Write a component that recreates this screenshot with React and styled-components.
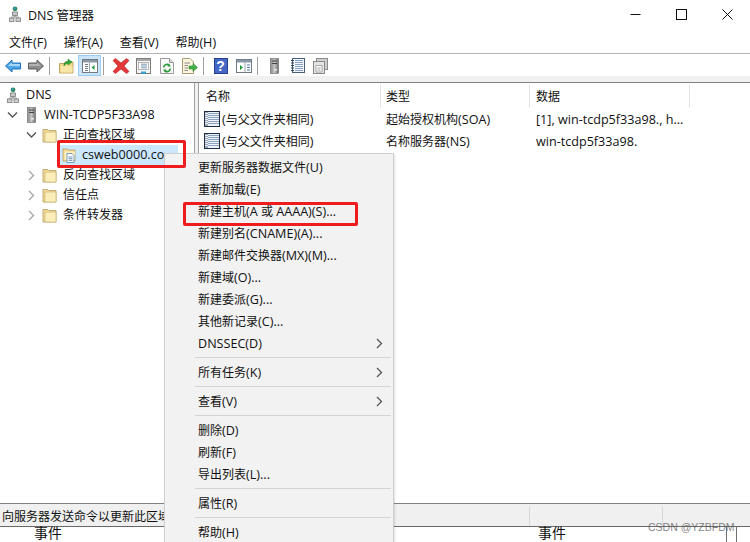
import React from 'react';
import styled, { createGlobalStyle } from 'styled-components';

const GlobalStyle = createGlobalStyle`
  html, body {
    margin: 0;
    padding: 0;
    background: #fff;
  }
  * {
    box-sizing: border-box;
  }
`;

const Window = styled.div`
  position: relative;
  width: 750px;
  height: 542px;
  overflow: hidden;
  display: flex;
  flex-direction: column;
  background: #fff;
  color: #111;
  font-family: 'Open Sans', 'Noto Sans CJK SC', sans-serif;
  font-size: 12px;
`;

// latin runs sit a bit wider than the CJK ones in the original UI font
const Latin = styled.span`
  font-size: 12.6px;
`;

const Mixed = ({ text }) =>
  text
    .split(/([\x20-\x7e]+)/)
    .filter(Boolean)
    .map((part, i) =>
      /^[\x20-\x7e]+$/.test(part) ? <Latin key={i}>{part}</Latin> : <span key={i}>{part}</span>
    );

const TitleBar = styled.div`
  height: 31px;
  flex: none;
  display: flex;
  align-items: center;
  padding: 0 0 3px 9px;
  gap: 7px;
  font-size: 12.5px;
`;

const TitleText = styled.span`
  flex: 1;
`;

const WinControls = styled.div`
  display: flex;
  align-items: center;
`;

const WinButton = styled.div`
  width: 46px;
  height: 24px;
  display: flex;
  align-items: center;
  justify-content: center;
`;

const MenuBar = styled.div`
  height: 23px;
  flex: none;
  display: flex;
  gap: 16.7px;
  align-items: center;
  padding-left: 9px;
  border-bottom: 1px solid #b4b4bc;
`;

const Toolbar = styled.div`
  height: 22px;
  flex: none;
  display: flex;
  padding: 1px 0 0 1px;
`;

const ToolButton = styled.div`
  width: 23px;
  height: 21px;
  display: flex;
  align-items: center;
  justify-content: center;
  background: ${(p) => (p.$active ? '#cce4f7' : 'transparent')};
  border: 1px solid ${(p) => (p.$active ? '#99cdf5' : 'transparent')};
`;

const ToolSep = styled.div`
  width: 8px;
  display: flex;
  padding-left: 2px;
  align-items: center;

  &::before {
    content: '';
    width: 1px;
    height: 18px;
    background: #a0a0a0;
  }
`;

const HelpButton = styled.div`
  width: 14px;
  height: 16px;
  background: #4468c4;
  border: 1px solid #26408f;
  color: #fff;
  text-align: center;
  line-height: 14px;
  font-family: 'Liberation Sans', sans-serif;
  font-weight: bold;
  font-size: 14px;
`;

const Strip = styled.div`
  height: 7px;
  flex: none;
  background: #f0f0f0;
  border-bottom: 1px solid #808080;
`;

const Panes = styled.div`
  flex: 1;
  display: flex;
  min-height: 0;
  background: #f0f0f0;
`;

const TreePane = styled.div`
  width: 195px;
  flex: none;
  background: #fff;
  padding-top: 2px;
  border-right: 1px solid #a0a0a0;
  overflow: hidden;
`;

const TreeRow = styled.div`
  height: 20px;
  display: flex;
  align-items: center;
  padding-left: ${(p) => p.$indent}px;
  white-space: nowrap;
`;

const TreeRowLabel = styled.span`
  margin-left: ${(p) => p.$gap ?? 7}px;
  line-height: 20px;
`;

const SelectedRow = styled(TreeRow)`
  background: #cce8ff;
  width: 118px;
  margin-left: 60px;
`;

const Chevron = styled.span`
  width: 12px;
  height: 12px;
  display: flex;
  align-items: center;
  justify-content: center;
  flex: none;
  margin-right: ${(p) => p.$after ?? 5}px;
`;

const ListPane = styled.div`
  flex: 1;
  margin-left: 3px;
  background: #fff;
  border-left: 1px solid #a0a0a0;
  display: flex;
  flex-direction: column;
  min-width: 0;
`;

const ListHeader = styled.div`
  height: 25px;
  flex: none;
  display: flex;
  padding-top: 1px;
`;

const HeaderCell = styled.div`
  width: ${(p) => p.$w}px;
  flex: none;
  padding-left: ${(p) => p.$pad}px;
  line-height: 25px;
  height: 24px;
  border-right: 1px solid #e5e5e5;
`;

const ListRow = styled.div`
  height: 22px;
  display: flex;
  align-items: center;
  white-space: nowrap;
`;

const NameCell = styled.div`
  width: 182px;
  flex: none;
  display: flex;
  align-items: center;
  gap: 2px;
  padding-left: 5px;
`;

const TextCell = styled.div`
  width: ${(p) => p.$w}px;
  flex: none;
  padding-left: 5px;
`;

const StatusBar = styled.div`
  height: 24px;
  flex: none;
  display: flex;
  background: #f0f0f0;
  border-top: 1px solid #808080;
  border-bottom: 1px solid #696969;
  padding-top: 2px;
`;

const StatusCell = styled.div`
  width: ${(p) => p.$w}px;
  flex: none;
  height: 20px;
  line-height: 21px;
  padding-left: 2px;
  white-space: nowrap;
  overflow: hidden;
  border-right: 1px solid #d8d8d8;
`;

const EventsRow = styled.div`
  height: 15px;
  flex: none;
  display: flex;
  line-height: 11px;
`;

const EventCell = styled.div`
  width: ${(p) => p.$w}px;
  flex: none;
  padding-left: ${(p) => p.$pad}px;
  font-size: 14px;
`;

const ContextMenu = styled.div`
  position: absolute;
  left: 164px;
  top: 153px;
  width: 230px;
  height: 400px;
  background: #f2f2f2;
  border: 1px solid #cfcfcf;
  padding: 2px 0 0 2px;
  box-shadow: 1px 1px 2px rgba(0, 0, 0, 0.12);
`;

const MenuItem = styled.div`
  height: 22px;
  display: flex;
  align-items: center;
  justify-content: space-between;
  padding-left: 31px;
  padding-right: 10px;
  white-space: nowrap;
`;

const MenuSep = styled.div`
  height: 1px;
  margin: 3px 2px 3px 28px;
  background: #d4d4d4;
`;

const RedBox = styled.div`
  position: absolute;
  left: ${(p) => p.$x}px;
  top: ${(p) => p.$y}px;
  width: ${(p) => p.$w}px;
  height: ${(p) => p.$h}px;
  border: 3px solid #ee1c1c;
  border-radius: 2px;
`;

const Watermark = styled.div`
  position: absolute;
  left: 648px;
  top: 521px;
  font-family: 'Liberation Sans', sans-serif;
  font-size: 10.5px;
  color: rgba(90, 90, 90, 0.75);
  white-space: nowrap;
`;

const BottomTicks = styled.div`
  position: absolute;
  left: 726px;
  top: 526px;
  width: 11px;
  height: 16px;
  border-left: 1px solid #707070;
  border-right: 1px solid #707070;
`;

const DnsIcon = () => (
  <svg width="12" height="16" viewBox="0 0 12 16">
    <circle cx="6" cy="2.8" r="2.4" fill="#2f8a5a" />
    <circle cx="5.6" cy="2.2" r="1" fill="#3a9ae0" />
    <rect x="3.5" y="6" width="5" height="3.5" fill="#c8c8c8" stroke="#7a7a7a" strokeWidth="0.8" />
    <path d="M6 9.5V11M2.5 12V11H9.5V12" stroke="#7a7a7a" fill="none" strokeWidth="0.8" />
    <rect x="0.5" y="12" width="4.5" height="3.5" fill="#d0d0d0" stroke="#7a7a7a" strokeWidth="0.8" />
    <rect x="7" y="12" width="4.5" height="3.5" fill="#d0d0d0" stroke="#7a7a7a" strokeWidth="0.8" />
  </svg>
);

const ServerIcon = () => (
  <svg width="9" height="16" viewBox="0 0 9 16">
    <defs>
      <linearGradient id="srv" x1="0" x2="1" y1="0" y2="0">
        <stop offset="0" stopColor="#8c8c8c" />
        <stop offset="0.5" stopColor="#c4c4c4" />
        <stop offset="1" stopColor="#6e6e6e" />
      </linearGradient>
    </defs>
    <rect x="0.5" y="0.5" width="8" height="15" fill="url(#srv)" stroke="#666" strokeWidth="0.6" />
    <rect x="2" y="2.5" width="5" height="1" fill="#444" />
    <rect x="2" y="5" width="5" height="1" fill="#444" />
    <rect x="4" y="11" width="3" height="1.5" fill="#e8e8e8" />
  </svg>
);

const FolderIcon = () => (
  <svg width="15" height="15" viewBox="0 0 15 15">
    <path d="M1 1.5H6L7 2.5H14V14H1Z" fill="#f3dd9b" stroke="#b89c5a" strokeWidth="0.8" />
    <path d="M3 4H14V14H3Z" fill="#fbeeb9" stroke="#c8ad6a" strokeWidth="0.6" />
  </svg>
);

const ZoneIcon = () => (
  <svg width="15" height="16" viewBox="0 0 15 16">
    <path d="M1 2H5L6 3H13V14H1Z" fill="#f3dd9b" stroke="#b89c5a" strokeWidth="0.8" />
    <path d="M2.5 4.5H13V13H2.5Z" fill="#fbeeb9" />
    <path d="M5 6.5H10L12 8.5V15.5H5Z" fill="#fff" stroke="#5b87ad" strokeWidth="0.8" />
    <path d="M6.5 10H10.5M6.5 11.7H10.5M6.5 13.4H10.5" stroke="#4a78a5" strokeWidth="0.8" />
  </svg>
);

const RecordIcon = () => (
  <svg width="16" height="16" viewBox="0 0 16 16">
    <rect x="0.5" y="0.5" width="15" height="15" fill="#eef3f8" stroke="#1f2c45" />
    <rect x="1" y="1" width="3" height="14" fill="#9aa7b6" />
    <path d="M1 2.5H4M1 4.5H4M1 6.5H4M1 8.5H4M1 10.5H4M1 12.5H4" stroke="#e6e9ee" />
    <path d="M4 2.5H15M4 4.5H15M4 6.5H15M4 8.5H15M4 10.5H15M4 12.5H15" stroke="#8ba3bf" />
  </svg>
);

const ChevronDown = () => (
  <svg width="11" height="8" viewBox="0 0 11 8">
    <path d="M1 1.5L5.5 6L10 1.5" fill="none" stroke="#555" strokeWidth="1.4" />
  </svg>
);

const ChevronRight = ({ color = '#a6a6a6' }) => (
  <svg width="7" height="11" viewBox="0 0 7 11">
    <path d="M1 1L5.5 5.5L1 10" fill="none" stroke={color} strokeWidth="1.3" />
  </svg>
);

const BackIcon = () => (
  <svg width="16" height="14" viewBox="0 0 16 14">
    <path d="M0.5 7L7 1V4H15.5V10H7V13Z" fill="#4ea6e6" stroke="#1d6fb8" />
    <path d="M3 7L7 3.5V5H15V7Z" fill="#a8d8f7" />
  </svg>
);

const ForwardIcon = () => (
  <svg width="16" height="14" viewBox="0 0 16 14">
    <path d="M15.5 7L9 1V4H0.5V10H9V13Z" fill="#8c8c8c" stroke="#5e5e5e" />
    <path d="M1 5H9V3.5L13 7H1Z" fill="#b4b4b4" />
  </svg>
);

const UpFolderIcon = () => (
  <svg width="15" height="16" viewBox="0 0 15 16">
    <path d="M0.5 5.5H5L6 4H14V15H0.5Z" fill="#f2d88a" stroke="#b3924a" strokeWidth="0.8" />
    <path d="M1.5 8H13.5V14.5H1.5Z" fill="#f8e6a8" />
    <path d="M5 8C5 4.5 7 3.5 9 3.5V1L13 4L9 7V5.2C7.5 5.2 6.3 6 5 8Z" fill="#2fa83a" stroke="#1a7a26" strokeWidth="0.5" />
  </svg>
);

const TreeIcon = () => (
  <svg width="16" height="14" viewBox="0 0 16 14">
    <rect x="0.5" y="0.5" width="15" height="13" fill="#fff" stroke="#6f7a85" />
    <rect x="1" y="1" width="14" height="2.5" fill="#8a98a8" />
    <path d="M3 5.5H6M3 7.5H6M3 9.5H6M3 11.5H6" stroke="#6f7a85" />
    <path d="M7.5 3.5V13.5" stroke="#9aa5b0" />
    <path d="M12.5 6V11L9.5 8.5Z" fill="#1f9a3a" />
  </svg>
);

const DeleteIcon = () => (
  <svg width="18" height="16" viewBox="0 0 18 16">
    <path d="M1 2.5L3.5 0.5L9 5L14.5 0.5L17 2.5L12 8L17 13.5L14.5 15.5L9 11L3.5 15.5L1 13.5L6 8Z" fill="#e2383a" stroke="#b51f20" strokeWidth="0.6" />
  </svg>
);

const PropsIcon = () => (
  <svg width="15" height="16" viewBox="0 0 15 16">
    <rect x="0.5" y="0.5" width="14" height="15" fill="#f5f5f5" stroke="#7d7d7d" />
    <rect x="1" y="1" width="13" height="2" fill="#a8a8a8" />
    <rect x="2.5" y="4.5" width="10" height="7" fill="#fff" stroke="#9a9a9a" strokeWidth="0.7" />
    <path d="M5 6.2H11M5 8H11M5 9.8H11" stroke="#5b7fa8" strokeWidth="0.8" />
    <rect x="5" y="13.5" width="5" height="2" fill="#2ea7e0" />
  </svg>
);

const RefreshIcon = () => (
  <svg width="14" height="16" viewBox="0 0 14 16">
    <path d="M0.5 0.5H9.5L13.5 4.5V15.5H0.5Z" fill="#f8f8f8" stroke="#9a9a9a" />
    <path d="M9.5 0.5V4.5H13.5" fill="#ddd" stroke="#9a9a9a" />
    <path d="M3.7 9.5A3.3 3.3 0 0 1 9.6 7.6M10.3 10.5A3.3 3.3 0 0 1 4.4 12.4" fill="none" stroke="#2a9a3a" strokeWidth="1.7" />
    <path d="M8.5 5.5L11 8.5L7.5 8.5Z" fill="#2a9a3a" />
    <path d="M5.5 14.5L3 11.5L6.5 11.5Z" fill="#2a9a3a" />
  </svg>
);

const ExportIcon = () => (
  <svg width="16" height="16" viewBox="0 0 16 16">
    <path d="M0.5 0.5H8L11.5 4V15.5H0.5Z" fill="#fbf5dc" stroke="#a89c78" />
    <path d="M2.5 5H8M2.5 7.5H6M2.5 10H6M2.5 12.5H6" stroke="#7a7a7a" strokeWidth="0.9" />
    <path d="M7 8H11V5.5L15.5 9.5L11 13.5V11H7Z" fill="#43b048" stroke="#2c8a33" strokeWidth="0.6" />
  </svg>
);

const ViewIcon = () => (
  <svg width="16" height="14" viewBox="0 0 16 14">
    <rect x="0.5" y="0.5" width="15" height="13" fill="#fff" stroke="#6f7a85" />
    <rect x="1" y="1" width="14" height="2.5" fill="#8a98a8" />
    <path d="M9 3.5V13.5" stroke="#9aa5b0" />
    <path d="M4 6V11L7 8.5Z" fill="#1f9a3a" />
    <path d="M11 6H14M11 8.5H14M11 11H14" stroke="#4a78b5" strokeWidth="1.2" />
  </svg>
);

const ListIcon = () => (
  <svg width="14" height="15" viewBox="0 0 14 15">
    <rect x="1.5" y="0.5" width="12" height="14" fill="#f2f5f9" stroke="#4a5f7a" />
    <path d="M0 2.5H3M0 5H3M0 7.5H3M0 10H3M0 12.5H3" stroke="#33445c" />
    <path d="M4 2.5H12M4 4.5H12M4 6.5H12M4 8.5H12M4 10.5H12M4 12.5H12" stroke="#7a97bb" strokeWidth="0.9" />
  </svg>
);

const CopyIcon = () => (
  <svg width="15" height="16" viewBox="0 0 15 16">
    <rect x="3.5" y="0.5" width="11" height="11" fill="#cfcfcf" stroke="#8a8a8a" />
    <rect x="0.5" y="3.5" width="11" height="12" fill="#e4e4e4" stroke="#8a8a8a" />
    <path d="M3 7.5H9V14H3Z" fill="#fff" stroke="#8a8a8a" strokeWidth="0.7" />
    <path d="M4.5 10H7.5M4.5 12H7.5" stroke="#777" strokeWidth="0.7" />
  </svg>
);

const menuGroups = [
  [
    { label: '更新服务器数据文件(U)' },
    { label: '重新加载(E)' },
    { label: '新建主机(A 或 AAAA)(S)...' },
    { label: '新建别名(CNAME)(A)...' },
    { label: '新建邮件交换器(MX)(M)...' },
    { label: '新建域(O)...' },
    { label: '新建委派(G)...' },
    { label: '其他新记录(C)...' },
    { label: 'DNSSEC(D)', sub: true },
  ],
  [{ label: '所有任务(K)', sub: true }],
  [{ label: '查看(V)', sub: true }],
  [{ label: '删除(D)' }, { label: '刷新(F)' }, { label: '导出列表(L)...' }],
  [{ label: '属性(R)' }],
  [{ label: '帮助(H)' }],
];

const closedFolders = ['反向查找区域', '信任点', '条件转发器'];

function App() {
  return (
    <Window>
      <GlobalStyle />
      <TitleBar>
        <DnsIcon />
        <TitleText>DNS 管理器</TitleText>
        <WinControls>
          <WinButton>
            <svg width="11" height="11" viewBox="0 0 11 11">
              <path d="M0.5 5.5H10.5" stroke="#111" />
            </svg>
          </WinButton>
          <WinButton>
            <svg width="11" height="11" viewBox="0 0 11 11">
              <rect x="0.5" y="0.5" width="10" height="10" fill="none" stroke="#111" />
            </svg>
          </WinButton>
          <WinButton>
            <svg width="11" height="11" viewBox="0 0 11 11">
              <path d="M0.5 0.5L10.5 10.5M10.5 0.5L0.5 10.5" stroke="#111" />
            </svg>
          </WinButton>
        </WinControls>
      </TitleBar>

      <MenuBar>
        <span><Mixed text="文件(F)" /></span>
        <span><Mixed text="操作(A)" /></span>
        <span><Mixed text="查看(V)" /></span>
        <span><Mixed text="帮助(H)" /></span>
      </MenuBar>

      <Toolbar>
        <ToolButton><BackIcon /></ToolButton>
        <ToolButton><ForwardIcon /></ToolButton>
        <ToolSep />
        <ToolButton><UpFolderIcon /></ToolButton>
        <ToolButton $active><TreeIcon /></ToolButton>
        <ToolSep />
        <ToolButton><DeleteIcon /></ToolButton>
        <ToolButton><PropsIcon /></ToolButton>
        <ToolButton><RefreshIcon /></ToolButton>
        <ToolButton><ExportIcon /></ToolButton>
        <ToolSep />
        <ToolButton><HelpButton>?</HelpButton></ToolButton>
        <ToolButton><ViewIcon /></ToolButton>
        <ToolSep />
        <ToolButton><ServerIcon /></ToolButton>
        <ToolButton><ListIcon /></ToolButton>
        <ToolButton><CopyIcon /></ToolButton>
      </Toolbar>
      <Strip />

      <Panes>
        <TreePane>
          <TreeRow $indent={7}>
            <DnsIcon />
            <TreeRowLabel><Mixed text="DNS" /></TreeRowLabel>
          </TreeRow>
          <TreeRow $indent={6}>
            <Chevron $after={9}><ChevronDown /></Chevron>
            <ServerIcon />
            <TreeRowLabel $gap={8}><Mixed text="WIN-TCDP5F33A98" /></TreeRowLabel>
          </TreeRow>
          <TreeRow $indent={25}>
            <Chevron><ChevronDown /></Chevron>
            <FolderIcon />
            <TreeRowLabel $gap={6}>正向查找区域</TreeRowLabel>
          </TreeRow>
          <SelectedRow $indent={2}>
            <ZoneIcon />
            <TreeRowLabel $gap={5}><Mixed text="csweb0000.co" /></TreeRowLabel>
          </SelectedRow>
          {closedFolders.map((name) => (
            <TreeRow $indent={25} key={name}>
              <Chevron><ChevronRight /></Chevron>
              <FolderIcon />
              <TreeRowLabel $gap={6}>{name}</TreeRowLabel>
            </TreeRow>
          ))}
        </TreePane>
        <ListPane>
          <ListHeader>
            <HeaderCell $w={182} $pad={7}>名称</HeaderCell>
            <HeaderCell $w={149} $pad={5}>类型</HeaderCell>
            <HeaderCell $w={160} $pad={6}>数据</HeaderCell>
          </ListHeader>
          <ListRow>
            <NameCell><RecordIcon /><span><Mixed text="(与父文件夹相同)" /></span></NameCell>
            <TextCell $w={150}><Mixed text="起始授权机构(SOA)" /></TextCell>
            <TextCell $w={160}><Mixed text="[1], win-tcdp5f33a98., h..." /></TextCell>
          </ListRow>
          <ListRow>
            <NameCell><RecordIcon /><span><Mixed text="(与父文件夹相同)" /></span></NameCell>
            <TextCell $w={150}><Mixed text="名称服务器(NS)" /></TextCell>
            <TextCell $w={160}><Mixed text="win-tcdp5f33a98." /></TextCell>
          </ListRow>
        </ListPane>
      </Panes>

      <StatusBar>
        <StatusCell $w={530}>向服务器发送命令以更新此区域</StatusCell>
        <StatusCell $w={133} />
      </StatusBar>
      <EventsRow>
        <EventCell $w={530} $pad={34}>事件</EventCell>
        <EventCell $w={120} $pad={8}>事件</EventCell>
      </EventsRow>

      <ContextMenu>
        {menuGroups.map((group, i) => (
          <React.Fragment key={i}>
            {i > 0 && <MenuSep />}
            {group.map((item) => (
              <MenuItem key={item.label}>
                <span><Mixed text={item.label} /></span>
                {item.sub && <ChevronRight color="#555" />}
              </MenuItem>
            ))}
          </React.Fragment>
        ))}
      </ContextMenu>

      <RedBox $x={57} $y={140} $w={129} $h={28} />
      <RedBox $x={183} $y={202} $w={175} $h={24} />
      <BottomTicks />
      <Watermark>CSDN @YZBFDM</Watermark>
    </Window>
  );
}

export default App;
